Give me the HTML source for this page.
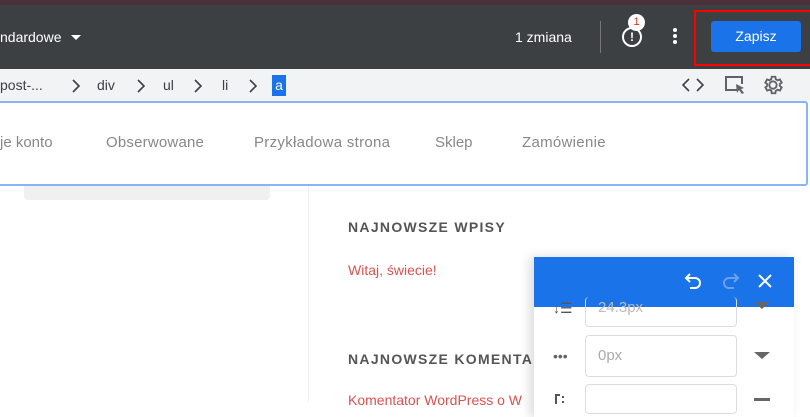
<!DOCTYPE html>
<html><head><meta charset="utf-8"><style>
*{margin:0;padding:0;box-sizing:border-box}
body{width:810px;height:402px;overflow:hidden;background:#fff;font-family:"Liberation Sans",sans-serif;position:relative}
.a{position:absolute}
.b{position:absolute;top:77px;font-size:14px;color:#3c4043}
.c{position:absolute;top:79px}
.m{position:absolute;top:134px;font-size:15px;color:#888;white-space:nowrap}
</style></head><body>
<div class="a" style="left:0;top:0;width:810px;height:5px;background:#4a3039"></div>
<div class="a" style="left:0;top:5px;width:810px;height:64px;background:#3c4043"></div>
<div class="a" style="left:0;top:29px;color:#fff;font-size:14px">ndardowe</div>
<div class="a" style="left:71px;top:35px;width:0;height:0;border-left:5px solid transparent;border-right:5px solid transparent;border-top:5px solid #fff"></div>
<div class="a" style="left:515px;top:29px;color:#fff;font-size:14px">1 zmiana</div>
<div class="a" style="left:600px;top:21px;width:1px;height:32px;background:#777"></div>
<div class="a" style="left:622px;top:27px;width:20px;height:20px;border:2px solid #fff;border-radius:50%;color:#fff;font-size:12px;font-weight:bold;text-align:center;line-height:16px">!</div>
<div class="a" style="left:628px;top:14px;width:17px;height:17px;background:#fff;border-radius:50%;color:#d93025;font-size:11px;text-align:center;line-height:17px">1</div>
<div class="a" style="left:673px;top:28px;width:4px;height:4px;background:#fff;border-radius:50%;box-shadow:0 6px 0 #fff,0 12px 0 #fff"></div>
<div class="a" style="left:694px;top:10px;width:116px;height:56px;border:2px solid #f00;border-right:none"></div>
<div class="a" style="left:711px;top:21px;width:90px;height:31px;background:#1a73e8;border-radius:3px;color:#fff;font-size:14px;text-align:center;line-height:31px">Zapisz</div>
<div class="a" style="left:0;top:69px;width:810px;height:32px;background:#f1f3f4"></div>
<div class="b" style="left:0">post-...</div>
<svg class="c" style="left:71px" width="10" height="14"><path d="M2 1l6 6-6 6" fill="none" stroke="#3c4043" stroke-width="1.6"/></svg>
<div class="b" style="left:97px">div</div>
<svg class="c" style="left:136px" width="10" height="14"><path d="M2 1l6 6-6 6" fill="none" stroke="#3c4043" stroke-width="1.6"/></svg>
<div class="b" style="left:163px">ul</div>
<svg class="c" style="left:193px" width="10" height="14"><path d="M2 1l6 6-6 6" fill="none" stroke="#3c4043" stroke-width="1.6"/></svg>
<div class="b" style="left:222px">li</div>
<svg class="c" style="left:248px" width="10" height="14"><path d="M2 1l6 6-6 6" fill="none" stroke="#3c4043" stroke-width="1.6"/></svg>
<div class="a" style="left:272px;top:75px;width:14px;height:21px;background:#1a73e8;color:#fff;font-size:14px;text-align:center;line-height:21px">a</div>
<svg class="a" style="left:682px;top:78px" width="22" height="14"><path d="M7 1L1 7l6 6M15 1l6 6-6 6" fill="none" stroke="#3c4043" stroke-width="1.6"/></svg>
<svg class="a" style="left:724px;top:74px" width="24" height="22"><path d="M13 16H2V3h16v7" fill="none" stroke="#5f6368" stroke-width="2"/><path d="M12 10l8 4-3 1 3 4-2 1-3-4-2 3z" fill="#5f6368"/></svg>
<svg class="a" style="left:762px;top:74px" width="22" height="22" viewBox="0 0 24 24"><path d="M12 8a4 4 0 100 8 4 4 0 000-8zm7.4 5l2.1 1.6-2 3.5-2.5-1a7 7 0 01-2 1.2L14.6 21h-4l-.4-2.7a7 7 0 01-2-1.200l-2.5 1-2-3.5L5.7 13a7 7 0 010-2L3.6 9.4l2-3.5 2.5 1a7 7 0 012-1.2L10.6 3h4l.4 2.7a7 7 0 012 1.2l2.5-1 2 3.5L19.4 11a7 7 0 010 2z" fill="none" stroke="#5f6368" stroke-width="2"/></svg>
<div class="a" style="left:-4px;top:101px;width:812px;height:85px;border:2px solid #8ab4f8;border-radius:3px;background:#fff"></div>
<div class="m" style="left:0">je konto</div>
<div class="m" style="left:106px;letter-spacing:.2px">Obserwowane</div>
<div class="m" style="left:254px;letter-spacing:.3px">Przykładowa strona</div>
<div class="m" style="left:435px">Sklep</div>
<div class="m" style="left:522px;letter-spacing:.3px">Zamówienie</div>
<div class="a" style="left:24px;top:186px;width:246px;height:14px;background:#f0f0f0;border-radius:0 0 4px 4px"></div>
<div class="a" style="left:308px;top:186px;width:1px;height:216px;background:#eee"></div>
<div class="a" style="left:348px;top:219px;font-size:14px;font-weight:bold;color:#555;letter-spacing:1.3px">NAJNOWSZE WPISY</div>
<div class="a" style="left:348px;top:262px;font-size:14px;color:#d9534f">Witaj, świecie!</div>
<div class="a" style="left:348px;top:351px;font-size:14px;font-weight:bold;color:#555;letter-spacing:1.3px">NAJNOWSZE KOMENTARZE</div>
<div class="a" style="left:348px;top:392px;font-size:14px;color:#d9534f">Komentator WordPress o W</div>
<div class="a" style="left:534px;top:257px;width:260px;height:160px;background:#fff;box-shadow:-4px 0 10px rgba(0,0,0,.15)"></div>
<div class="a" style="left:534px;top:257px;width:260px;height:50px;background:#1a73e8"></div>
<svg class="a" style="left:684px;top:272px" width="20" height="18"><path d="M6 2L2 6l4 4M2 6h9a5 5 0 010 10H6" fill="none" stroke="#fff" stroke-width="2"/></svg>
<svg class="a" style="left:720px;top:272px" width="20" height="18"><path d="M14 2l4 4-4 4M18 6H9a5 5 0 000 10h5" fill="none" stroke="#6aa2f0" stroke-width="2"/></svg>
<svg class="a" style="left:757px;top:273px" width="16" height="16"><path d="M2 2l12 12M14 2L2 14" stroke="#fff" stroke-width="2"/></svg>
<div class="a" style="left:585px;top:297px;width:152px;height:30px;border:1px solid #ddd;border-radius:4px;border-top:none;color:#bbb;font-size:15px;padding:2px 12px">24.3px</div>
<div class="a" style="left:585px;top:335px;width:152px;height:42px;border:1px solid #ddd;border-radius:4px;color:#aaa;font-size:15px;padding:11px 12px">0px</div>
<div class="a" style="left:585px;top:384px;width:152px;height:30px;border:1px solid #ddd;border-radius:4px"></div>
<div class="a" style="left:553px;top:300px;font-size:14px;color:#555">↓☰</div>
<div class="a" style="left:553px;top:348px;font-size:14px;color:#666">•••</div>
<svg class="a" style="left:554px;top:394px" width="18" height="10"><path d="M2 0v10M2 1h4M9 2v2M9 7v2" fill="none" stroke="#555" stroke-width="2"/></svg>
<div class="a" style="left:754px;top:302px;border-left:8px solid transparent;border-right:8px solid transparent;border-top:7px solid #666"></div>
<div class="a" style="left:754px;top:352px;border-left:8px solid transparent;border-right:8px solid transparent;border-top:7px solid #666"></div>
<div class="a" style="left:754px;top:398px;width:16px;height:3px;background:#666"></div>
</body></html>
